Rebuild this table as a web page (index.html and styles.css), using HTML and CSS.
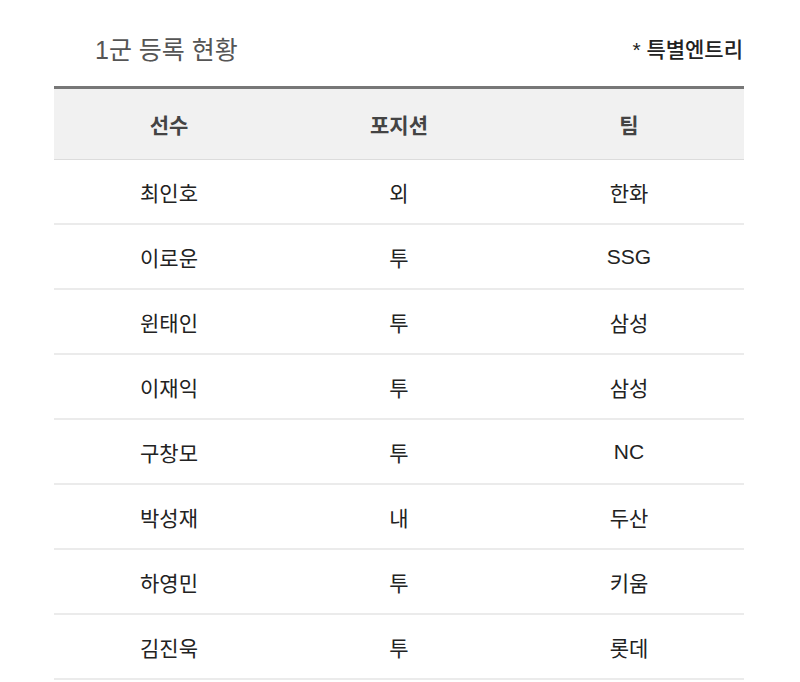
FILE: index.html
```html
<!DOCTYPE html>
<html lang="ko">
<head>
<meta charset="utf-8">
<link rel="stylesheet" href="styles.css">
</head>
<body>
<div class="page">
  <div class="head">
    <h2 class="title">1군 등록 현황</h2>
    <span class="note">* 특별엔트리</span>
  </div>
  <table class="roster">
    <thead>
      <tr><th>선수</th><th>포지션</th><th>팀</th></tr>
    </thead>
    <tbody>
      <tr><td>최인호</td><td>외</td><td>한화</td></tr>
      <tr><td>이로운</td><td>투</td><td>SSG</td></tr>
      <tr><td>윈태인</td><td>투</td><td>삼성</td></tr>
      <tr><td>이재익</td><td>투</td><td>삼성</td></tr>
      <tr><td>구창모</td><td>투</td><td>NC</td></tr>
      <tr><td>박성재</td><td>내</td><td>두산</td></tr>
      <tr><td>하영민</td><td>투</td><td>키움</td></tr>
      <tr><td>김진욱</td><td>투</td><td>롯데</td></tr>
    </tbody>
  </table>
</div>
</body>
</html>
```
FILE: styles.css
```css
html, body {
  margin: 0;
  padding: 0;
  background: #fff;
}
body {
  font-family: "Liberation Sans", "Noto Sans CJK KR", sans-serif;
  color: #222;
}
.page {
  padding: 0 56px 0 54px;
}
.head {
  display: flex;
  justify-content: space-between;
  align-items: center;
  height: 86px;
  box-sizing: border-box;
  padding: 10px 1px 0 41px;
}
.title {
  margin: 0;
  font-size: 25px;
  font-weight: 400;
  color: #555;
}
.note {
  font-size: 21px;
  font-weight: 500;
  color: #222;
}
.roster {
  width: 100%;
  border-collapse: collapse;
  table-layout: fixed;
  border-top: 3px solid #777;
}
.roster th {
  height: 70px;
  padding: 0;
  background: #f1f1f1;
  border-bottom: 1px solid #dcdcdc;
  font-size: 21px;
  font-weight: 700;
  color: #444;
  text-align: center;
}
.roster td {
  height: 63px;
  padding: 0;
  border-bottom: 2px solid #ebebeb;
  font-size: 21px;
  color: #222;
  text-align: center;
}
```
